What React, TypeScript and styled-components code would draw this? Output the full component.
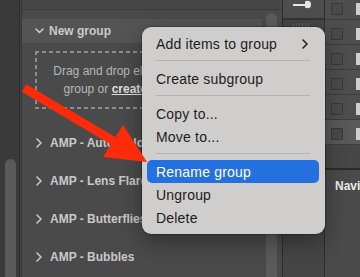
import React from "react";
import styled, { createGlobalStyle } from "styled-components";

const Global = createGlobalStyle`
  html, body { margin: 0; padding: 0; background: #4a4a4a; }
  body { font-family: "Liberation Sans", Arial, sans-serif; }
  #root { width: 360px; height: 277px; }
`;

const Screen = styled.div`
  position: relative;
  width: 360px;
  height: 277px;
  overflow: hidden;
  display: flex;
  background: #4a4a4a;
`;

const LeftRail = styled.div`
  width: 19px;
  flex: none;
  box-sizing: border-box;
  background: #3a3a3a;
  display: flex;
  flex-direction: column;
  padding: 159px 3px 0 5px;
`;

const RailThumb = styled.div`
  flex: 1;
  border-radius: 6px 6px 0 0;
  background: #5a5a5a;
`;

const Gutter = styled.div`
  width: 1px;
  flex: none;
  background: #464646;
  border-left: 1px solid #2c2c2c;
  border-right: 1px solid #363636;
`;

const Panel = styled.div`
  width: 260px;
  flex: none;
  display: flex;
  flex-direction: column;
  background: #4a4a4a;
`;

const TopStrip = styled.div`
  height: 9px;
  flex: none;
  background: #474747;
  border-bottom: 1px solid #3c3c3c;
`;

const PanelBody = styled.div`
  flex: 1;
  display: flex;
  min-height: 0;
`;

const List = styled.div`
  flex: 1;
  padding-top: 9px;
  display: flex;
  flex-direction: column;
`;

const ScrollTrack = styled.div`
  width: 20px;
  flex: none;
  box-sizing: border-box;
  padding: 3px 5px 0 4px;
  display: flex;
`;

const ScrollThumb = styled.div`
  flex: 1;
  border-radius: 6px 6px 0 0;
  background: #5b5b5b;
`;

const GroupHeader = styled.div`
  height: 24px;
  display: flex;
  align-items: center;
  gap: 5px;
  padding-left: 13px;
  background: #545454;
  color: #cacaca;
  font-size: 12px;
  font-weight: 700;
`;

const dash = "#8e8e8e";
const DropBox = styled.div`
  margin: 8px 17px 0 13px;
  height: 58px;
  box-sizing: border-box;
  display: flex;
  align-items: center;
  justify-content: center;
  text-align: center;
  color: #b7b7b7;
  font-size: 12px;
  line-height: 18px;
  background:
    repeating-linear-gradient(90deg, ${dash} 0 4px, transparent 4px 7px) top left / 100% 2px no-repeat,
    repeating-linear-gradient(90deg, ${dash} 0 4px, transparent 4px 7px) bottom left / 100% 2px no-repeat,
    repeating-linear-gradient(180deg, ${dash} 0 4px, transparent 4px 7px) top left / 2px 100% no-repeat,
    repeating-linear-gradient(180deg, ${dash} 0 4px, transparent 4px 7px) top right / 2px 100% no-repeat;
`;

const CreateLink = styled.span`
  color: #dedede;
  font-weight: 700;
  text-decoration: underline;
`;

const Rows = styled.div`
  margin-top: 15px;
  display: flex;
  flex-direction: column;
`;

const GroupRow = styled.div`
  height: 38px;
  display: flex;
  align-items: center;
  gap: 8px;
  padding-left: 14px;
  color: #c9c9c9;
  font-size: 12px;
  font-weight: 700;
  white-space: nowrap;
`;

const RightArea = styled.div`
  flex: none;
  width: 78px;
  box-sizing: border-box;
  display: flex;
  border-left: 1px solid #2e2e2e;
`;

const ToolColumn = styled.div`
  width: 41px;
  flex: none;
  display: flex;
  flex-direction: column;
  background: #454545;
  border-right: 1px solid #2e2e2e;
`;

const ToolCell = styled.div`
  height: 18px;
  flex: none;
  background: #4e4e4e;
  border-bottom: 2px solid #343434;
  padding-left: 10px;
  display: flex;
  align-items: flex-start;
`;

const Grip = styled.div`
  margin: 3px 0 0 10px;
  width: 17px;
  height: 4px;
  background: repeating-linear-gradient(90deg, #5f5f5f 0 1px, transparent 1px 3px);
`;

const LayerColumn = styled.div`
  width: 35px;
  flex: none;
  display: flex;
  flex-direction: column;
`;

const CheckRow = styled.div<{ $first?: boolean; $selected?: boolean }>`
  height: ${(p) => (p.$first ? 19 : 24)}px;
  flex: none;
  box-sizing: content-box;
  display: flex;
  align-items: flex-start;
  padding: ${(p) => (p.$first ? 3 : 8)}px 0 0 6px;
  height: ${(p) => (p.$first ? 16 : 16)}px;
  background: ${(p) => (p.$selected ? "#595959" : "#4e4e4e")};
  border-bottom: 1px solid #3d3d3d;
`;

const Check = styled.div`
  width: 12px;
  height: 12px;
  box-sizing: border-box;
  border: 1px solid #383838;
  border-radius: 1px;
  background: #4a4a4a;
`;

const Thumb = styled.div`
  width: 4px;
  height: 12px;
  margin-left: 13px;
  background: #cfcfcf;
`;

const EmptyBand = styled.div`
  height: 23px;
  flex: none;
  background: #474747;
`;

const ThickLine = styled.div`
  height: 2px;
  flex: none;
  background: #2c2c2c;
`;

const NavHeader = styled.div`
  flex: 1;
  background: #4a4a4a;
  padding: 9px 0 0 10px;
  color: #ececec;
  font-size: 12px;
  font-weight: 700;
  white-space: nowrap;
  overflow: hidden;
`;

const Menu = styled.div`
  position: absolute;
  left: 142px;
  top: 27px;
  width: 183px;
  box-sizing: border-box;
  padding: 5px 6px 5px 5px;
  background: #cfcecd;
  border-radius: 9px;
  box-shadow: 0 0 0 0.5px rgba(0, 0, 0, 0.45), 0 8px 22px rgba(0, 0, 0, 0.35);
  display: flex;
  flex-direction: column;
`;

const MenuItem = styled.div<{ $active?: boolean }>`
  height: 23px;
  display: flex;
  align-items: center;
  justify-content: space-between;
  padding: 0 11px 0 9px;
  border-radius: 5px;
  font-size: 14px;
  letter-spacing: 0.2px;
  color: ${(p) => (p.$active ? "#ffffff" : "#1c1c1c")};
  background: ${(p) => (p.$active ? "#2470de" : "transparent")};
  white-space: nowrap;
`;

const MenuSeparator = styled.div`
  height: 1px;
  margin: 5px 9px 6px;
  background: #b3b2b1;
`;

const ArrowLayer = styled.svg`
  position: absolute;
  left: 0;
  top: 0;
  pointer-events: none;
`;

const ChevronDown = () => (
  <svg width="9" height="6" viewBox="0 0 9 6">
    <polyline points="1,1 4.5,4.5 8,1" fill="none" stroke="#c8c8c8" strokeWidth="1.6" strokeLinecap="round" strokeLinejoin="round" />
  </svg>
);

const ChevronRight = ({ color = "#c8c8c8" }: { color?: string }) => (
  <svg width="6" height="10" viewBox="0 0 6 10">
    <polyline points="1,1 5,5 1,9" fill="none" stroke={color} strokeWidth="1.6" strokeLinecap="round" strokeLinejoin="round" />
  </svg>
);

const SliderIcon = () => (
  <svg width="22" height="10" viewBox="0 0 22 10">
    <rect x="0" y="4" width="12" height="2" fill="#e6e6e6" />
    <path d="M12 1.5 C14 0.5 18 0 18 4.5 C18 9 14 8.5 12 7.5 Z" fill="#e6e6e6" />
  </svg>
);

const groups = ["AMP - Auto Colour", "AMP - Lens Flares", "AMP - Butterflies", "AMP - Bubbles"];

export default function App() {
  return (
    <>
      <Global />
      <Screen>
        <LeftRail>
          <RailThumb />
        </LeftRail>
        <Gutter />
        <Panel>
          <TopStrip />
          <PanelBody>
            <List>
              <GroupHeader>
                <ChevronDown />
                <span>New group</span>
              </GroupHeader>
              <DropBox>
                <div>
                  Drag and drop elements into this
                  <br />
                  group or <CreateLink>create</CreateLink> a new group
                </div>
              </DropBox>
              <Rows>
                {groups.map((g) => (
                  <GroupRow key={g}>
                    <ChevronRight />
                    <span>{g}</span>
                  </GroupRow>
                ))}
              </Rows>
            </List>
            <ScrollTrack>
              <ScrollThumb />
            </ScrollTrack>
          </PanelBody>
        </Panel>
        <RightArea>
          <ToolColumn>
            <ToolCell>
              <SliderIcon />
            </ToolCell>
            <Grip />
          </ToolColumn>
          <LayerColumn>
            {[0, 1, 2, 3, 4, 5].map((i) => (
              <CheckRow key={i} $first={i === 0} $selected={i === 5}>
                <Check />
                <Thumb />
              </CheckRow>
            ))}
            <EmptyBand />
            <ThickLine />
            <NavHeader>Navigator</NavHeader>
          </LayerColumn>
        </RightArea>

        <Menu>
          <MenuItem>
            <span>Add items to group</span>
            <ChevronRight color="#222" />
          </MenuItem>
          <MenuSeparator />
          <MenuItem>Create subgroup</MenuItem>
          <MenuSeparator />
          <MenuItem>Copy to...</MenuItem>
          <MenuItem>Move to...</MenuItem>
          <MenuSeparator />
          <MenuItem $active>Rename group</MenuItem>
          <MenuItem>Ungroup</MenuItem>
          <MenuItem>Delete</MenuItem>
        </Menu>

        <ArrowLayer width="360" height="277" viewBox="0 0 360 277">
          <line x1="24" y1="88" x2="116" y2="142.5" stroke="#fe2b0b" strokeWidth="8.5" />
          <polygon points="147,162 123,125 103,157" fill="#fe2b0b" />
        </ArrowLayer>
      </Screen>
    </>
  );
}
